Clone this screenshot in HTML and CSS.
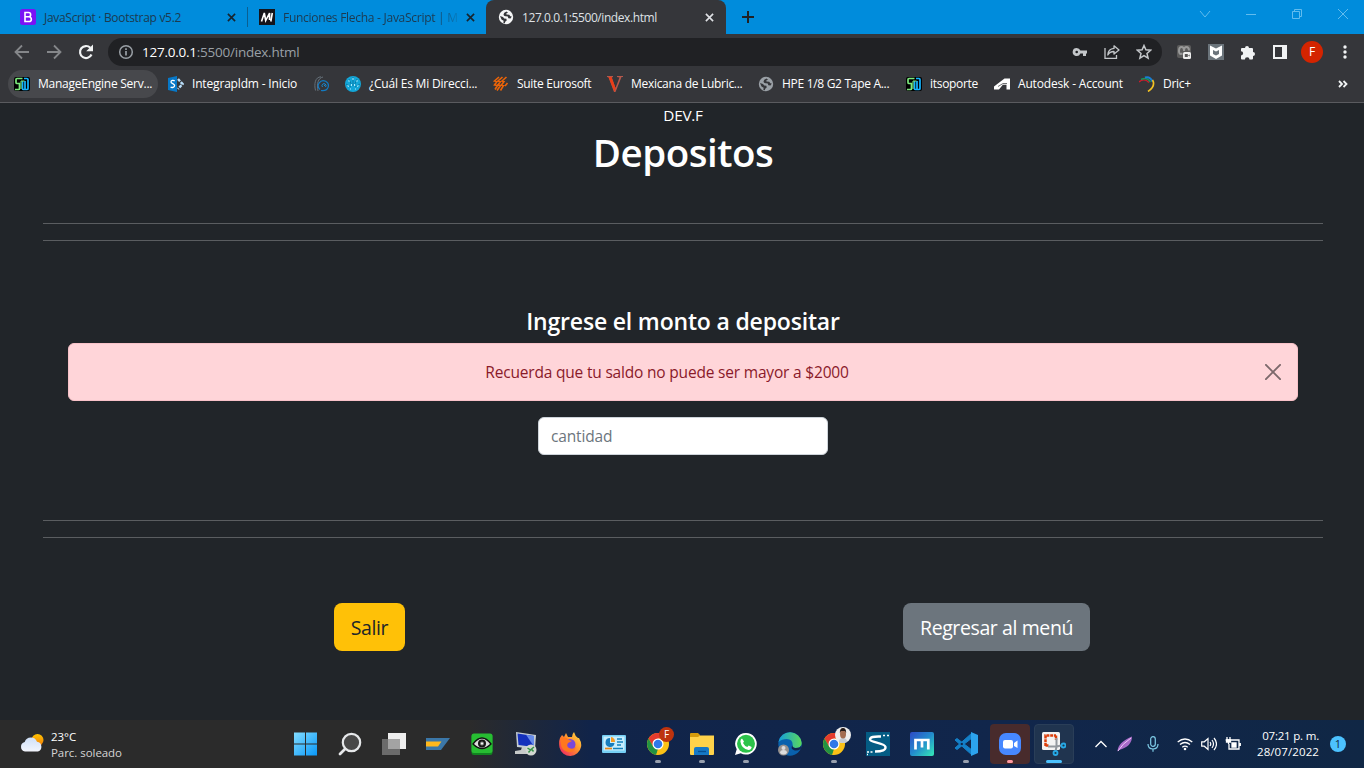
FILE: index.html
```
<!DOCTYPE html>
<html lang="es">
<head>
<meta charset="utf-8">
<title>127.0.0.1:5500/index.html</title>
<link rel="stylesheet" href="styles.css">
</head>
<body>
<svg class="defs" width="0" height="0">
  <defs>
    <symbol id="me" viewBox="0 0 16 16"><rect y="1" width="16" height="14" rx="2" fill="#000"/><path d="M8.500 2.500H3q-1 0-1 1v3q0 1 1 1h2.500v5q0 1-1 1H1" fill="none" stroke="#7be87b" stroke-width="1.700"/><path d="M8.500 5v7.500q0 1 1 1h1.500V5M10 2.500h3q1 0 1 1v9q0 1-1 1h-2" fill="none" stroke="#14b4ff" stroke-width="1.700"/><path d="M7 13V5h3.500" fill="none" stroke="#7be87b" stroke-width="1"/></symbol>
    <symbol id="globe" viewBox="0 0 16 16"><circle cx="8" cy="8" r="7.200" fill="currentColor"/><path d="M8.500 2.600Q5.500 3.500 5.500 5.500T8 7.300l1.800.2.500 1.700 2.200.4 1.300-2-1.500-.3-1-1.500-2.800-.2-.3-1 1.800-.8zM2 7l3 .9 1.200 1.500 2.200.4.3 1.700-1.500 1.200-.3 1.600-1.500-.4.200-2.100L3.500 10.500z" fill="var(--land)"/></symbol>
    <symbol id="chrome" viewBox="0 0 24 24"><circle cx="12" cy="12" r="11" fill="#fbc116"/><path d="M2.500 6.500A11 11 0 0 1 21.500 6.500H12L7.200 14.700z" fill="#e33b2e"/><path d="M2.500 6.500L7.200 14.800 12 17.500l-1.400 5.400A11 11 0 0 1 2.500 6.500z" fill="#229342"/><path d="M12 17.500l4.800-2.800L11.500 23l-1.500-.2z" fill="#fbc116"/><circle cx="12" cy="12" r="5.500" fill="#fff"/><circle cx="12" cy="12" r="4.300" fill="#3078e8"/></symbol>
  </defs>
</svg>

<div class="tabs">
  <div class="tab tab-a">
    <svg width="16" height="16" viewBox="0 0 16 16"><rect width="16" height="16" rx="2.500" fill="#7a12f5"/><path d="M5 3.500h3.500a2 2 0 0 1 0 4.300H5zM5 7.800h4a2.300 2.300 0 0 1 0 4.700H5z" fill="none" stroke="#fff" stroke-width="1.600"/></svg>
    <span class="tab-t t1">JavaScript · Bootstrap v5.2</span>
    <svg class="x" viewBox="0 0 10 10"><path d="M1 1l8 8M9 1l-8 8"/></svg>
  </div>
  <div class="sep"></div>
  <div class="tab tab-b">
    <svg width="16" height="16" viewBox="0 0 16 16"><rect width="16" height="16" fill="#15141a"/><path d="M2.500 12.500L5.300 4l1.400 7.500L10.600 4l-.1 7M13.300 4l-1.500 8.500" fill="none" stroke="#fff" stroke-width="1.600"/></svg>
    <span class="tab-t t2">Funciones Flecha - JavaScript | M</span>
    <svg class="x" viewBox="0 0 10 10"><path d="M1 1l8 8M9 1l-8 8"/></svg>
  </div>
  <div class="tab tab-c">
    <svg class="tab-globe" width="16" height="16"><use href="#globe"/></svg>
    <span class="tab-t t3">127.0.0.1:5500/index.html</span>
    <svg class="x light" viewBox="0 0 10 10"><path d="M1 1l8 8M9 1l-8 8"/></svg>
  </div>
  <svg class="plus" viewBox="0 0 12 12"><path d="M6 0v12M0 6h12" stroke="#202124" stroke-width="2"/></svg>
  <div class="winctl">
    <svg width="12" height="12" viewBox="0 0 12 12"><path d="M1 3l5 6 5-6"/></svg>
    <svg width="12" height="12" viewBox="0 0 12 12"><path d="M1 6.500h10"/></svg>
    <svg width="12" height="12" viewBox="0 0 12 12"><path d="M1.500 3.500h7v7h-7zM3.500 3.500v-2h7v7h-2"/></svg>
    <svg width="12" height="12" viewBox="0 0 12 12"><path d="M1 1l10 10M11 1L1 11"/></svg>
  </div>
</div>

<div class="toolbar">
  <svg class="nav" viewBox="0 0 16 16"><path d="M15 8H2M8 1.500L1.500 8 8 14.500" fill="none" stroke="#85878a" stroke-width="1.800"/></svg>
  <svg class="nav" viewBox="0 0 16 16"><path d="M1 8h13M8 1.500L14.500 8 8 14.500" fill="none" stroke="#85878a" stroke-width="1.800"/></svg>
  <svg class="nav" viewBox="0 0 16 16"><path d="M13.500 10.500A6 6 0 1 1 12.300 3.800" fill="none" stroke="#f1f3f4" stroke-width="2.200"/><path d="M15 .5v6.800H8.200z" fill="#f1f3f4"/></svg>
  <div class="omni">
    <svg width="16" height="16" viewBox="0 0 16 16"><circle cx="8" cy="8" r="6.300" fill="none" stroke="#9aa0a6" stroke-width="1.500"/><path d="M8 7v4.500M8 4.200v1.700" stroke="#9aa0a6" stroke-width="1.700"/></svg>
    <span class="url"><b>127.0.0.1</b>:5500/index.html</span>
    <svg width="16" height="16" viewBox="0 0 16 16"><path d="M4.700 4a4 4 0 1 0 3.700 5.400H11V12h3V9.400h1V6.600H8.400A4 4 0 0 0 4.700 4zm0 2.700a1.300 1.300 0 1 1 0 2.600 1.300 1.300 0 0 1 0-2.600z" fill="#c4c7ca"/></svg>
    <svg width="16" height="16" viewBox="0 0 16 16" fill="none" stroke="#c4c7ca" stroke-width="1.300"><path d="M1 4v10.400h11.500V11"/><path d="M10 1.800l5 4.200-5 4V7.500C7 7.500 5 8.800 3.800 11 4 7.500 6.200 4.700 10 4.400z" stroke-linejoin="round"/></svg>
    <svg width="16" height="16" viewBox="0 0 16 16"><path d="M8 1.500l1.900 4.300 4.700.4L11 9.400l1.100 4.700L8 11.600l-4.100 2.500L5 9.400 1.400 6.200l4.700-.4z" fill="none" stroke="#c4c7ca" stroke-width="1.500"/></svg>
  </div>
  <div class="ext">
    <svg width="16" height="16" viewBox="0 0 16 16"><rect x="1" y="1" width="14" height="13" rx="2" fill="#5b5b5b"/><path d="M6.500 9.500Q3 11 3 7q0-4 2.500-4T8 7q0-4 2.500-4T13 6.500" fill="none" stroke="#999" stroke-width="2"/><rect x="7" y="8" width="8" height="7" rx="1.500" fill="#eee"/><path d="M8.800 10h3v3h-3zM12 11.500l1.700-1v2z" fill="#555"/></svg>
    <svg width="16" height="16" viewBox="0 0 16 16"><rect width="16" height="16" fill="#6b747b"/><path d="M2 1.500l6 3 6-3v10L8 15l-6-3.500zM5 6v4l3 1.600 3-1.600V6L8 7.500z" fill="#fff" fill-rule="evenodd"/></svg>
    <svg width="16" height="16" viewBox="0 0 16 16"><path d="M1.500 4H5a2 2 0 1 1 4 0h3q1 0 1 1v3a2 2 0 1 1 0 4v2.500q0 1-1 1H9.500a2.300 2.300 0 0 0-4.600 0H2q-1 0-1-1v-3a2 2 0 1 0 0-4.300V5z" fill="#f1f3f4"/></svg>
    <svg width="16" height="16" viewBox="0 0 16 16"><path d="M1 1h14v14H1zM3 3v10h7V3z" fill="#f1f3f4" fill-rule="evenodd"/></svg>
  </div>
  <div class="avatar">F</div>
  <svg class="dots" viewBox="0 0 4 14" fill="#f1f3f4"><circle cx="2" cy="2" r="1.700"/><circle cx="2" cy="7" r="1.700"/><circle cx="2" cy="12" r="1.700"/></svg>
</div>

<div class="marks">
  <div class="bm b1"><svg><use href="#me"/></svg><span>ManageEngine Serv...</span></div>
  <div class="bm b2"><svg viewBox="0 0 16 16"><path d="M0 2l9-2v16l-9-2z" fill="#0778c8"/><path d="M6.700 5C5.500 4 3 4.300 3 6s3.600 1.700 3.600 3.500S4 12 2.600 11" fill="none" stroke="#fff" stroke-width="1.300"/><path d="M10 3l4.500 5-4.500 5" fill="none" stroke="#b9defa" stroke-width="2.500" stroke-dasharray="3 1.200"/></svg><span>Integrapldm - Inicio</span></div>
  <div class="bm b3"><svg viewBox="0 0 16 16" fill="none"><path d="M7 .8C1 1 0 8 1.500 14.500M9 1C4 2 2.500 8 4 15" stroke="#66717a"/><path d="M6 13.500a5 5 0 1 1 8-2c-1 2.500-4 3.500-7 3" stroke="#137bc2" stroke-width="1.200"/><path d="M8.500 11a2 2 0 1 1 3 0M10 10l2-2" stroke="#168bd4" stroke-width="1"/></svg></div>
  <div class="bm b4"><svg viewBox="0 0 16 16"><circle cx="8" cy="8" r="8" fill="#13a6d8"/><path d="M8 1v9M4 3l3 7M12 3l-3 7M1 8l5 3M15 8l-5 3" stroke="#087ba8" stroke-width="1"/><path d="M8 2v2M3.500 4.500l1 1M11.500 5.500l1-1M2.500 9.500l1.500 1M12 10.500l1.500-1M6.500 8v2M9.500 8v2M5 13h1M10 13h1" stroke="#a8ecff" stroke-width="1.100"/></svg><span>¿Cuál Es Mi Direcci...</span></div>
  <div class="bm b5"><svg viewBox="0 0 16 16"><path d="M6 1L1.500 5 4 5.500 1.500 9 4.500 9.500 2 13.500M9.500 1L5 5l2.500.5L5 9l2.500.5L4 14.500M13.500 1L9 5l2 .5L8.500 9l2 .5-3 5M14.500 7L12 10" fill="none" stroke="#ec6408" stroke-width="1.600"/></svg><span>Suite Eurosoft</span></div>
  <div class="bm b6"><svg viewBox="0 0 16 16"><path d="M0 0h6v1L4.800 1.500 8.500 12l4-10.500L10 1V0h6v1h-1.500L8.500 16H7L1.500 1.200 0 1z" fill="#b4584c"/><path d="M1.500 1h3l4 11-1 4z" fill="#ee3d17"/></svg><span>Mexicana de Lubric...</span></div>
  <div class="bm b7"><svg class="gray-globe"><use href="#globe"/></svg><span>HPE 1/8 G2 Tape A...</span></div>
  <div class="bm b8"><svg><use href="#me"/></svg><span>itsoporte</span></div>
  <div class="bm b9"><svg viewBox="0 0 16 16"><path d="M0 13.500v-3L10.500 2.500H16v11h-3.500V8.800h-3.700L5 13.500z" fill="#fff"/><path d="M4 10.500L9 7.500h4" stroke="#35363a" stroke-width=".7" fill="none"/></svg><span>Autodesk - Account</span></div>
  <div class="bm b10"><svg viewBox="0 0 16 16" fill="none" stroke-width="1.400"><path d="M0 6Q5 1.500 10 6.500" stroke="#cf1b2b"/><path d="M2 3.500Q8 .5 11.500 6" stroke="#16955b"/><path d="M6 1.500q5-1.500 7.500 4" stroke="#197fd4" stroke-width="2"/><path d="M13.500 4Q17 10 9 15.500" stroke="#f4c322" stroke-width="1.600"/></svg><span>Dric+</span></div>
  <svg class="more" viewBox="0 0 10 8"><path d="M1 1l3 3-3 3M5.500 1l3 3-3 3" fill="none" stroke="#f1f3f4" stroke-width="1.800"/></svg>
</div>

<main class="page">
  <div class="brand">DEV.F</div>
  <h1>Depositos</h1>
  <hr class="r1"><hr class="r2">
  <h4>Ingrese el monto a depositar</h4>
  <div class="alert"><span>Recuerda que tu saldo no puede ser mayor a $2000</span>
    <svg viewBox="0 0 16 16"><path d="M.9 .9l14.200 14.200M15.100 .9L.9 15.100" stroke="#7c686b" stroke-width="1.900" stroke-linecap="round"/></svg>
  </div>
  <input class="amount" type="text" placeholder="cantidad">
  <hr class="r3"><hr class="r2">
  <div class="actions">
    <div class="cell"><button class="btn exit">Salir</button></div>
    <div class="cell"><button class="btn back">Regresar al menú</button></div>
  </div>
</main>

<footer class="taskbar">
  <svg class="weather" viewBox="0 0 24 20"><defs><linearGradient id="sun" x2="0" y2="1"><stop stop-color="#ffc400"/><stop offset="1" stop-color="#f27a0a"/></linearGradient><linearGradient id="cl" x2="0" y2="1"><stop stop-color="#cfe0f8"/><stop offset="1" stop-color="#f2f5fc"/></linearGradient></defs><circle cx="17.500" cy="7" r="6" fill="url(#sun)"/><path d="M5 18.500a4.800 4.800 0 0 1-.3-9.400A6.500 6.500 0 0 1 17 8.800a5 5 0 0 1 1 9.700z" fill="url(#cl)"/></svg>
  <div class="wtext"><div class="deg">23°C</div><div class="cond">Parc. soleado</div></div>
  <div class="apps">
    <div class="app"><svg viewBox="0 0 24 24"><defs><linearGradient id="win" x2="1" y2="1"><stop stop-color="#82dcff"/><stop offset="1" stop-color="#0897f8"/></linearGradient></defs><path d="M0 .5h11v11H0zM12 .5h11v11H12zM0 12.500h11v11H0zM12 12.500h11v11H12z" fill="url(#win)"/></svg></div>
    <div class="app"><svg viewBox="0 0 24 24"><circle cx="13.500" cy="10.500" r="8.700" fill="#484848" stroke="#e6e8ea" stroke-width="2.200"/><path d="M7 17l-5 5" stroke="#e6e8ea" stroke-width="2.800" stroke-linecap="round"/></svg></div>
    <div class="app"><svg viewBox="0 0 24 24"><rect x="6" y="1" width="18" height="16" fill="#eeeeee"/><rect y="7" width="18" height="16" fill="#6b6b6b"/><path d="M6 7h12v10H6z" fill="#a3a3a3"/></svg></div>
    <div class="app"><svg viewBox="0 0 24 24"><path d="M0 6h24L15 18H0z" fill="#3b77a8"/><path d="M0 9.500h15.500l-3.500 5H0z" fill="#ffb81c"/></svg></div>
    <div class="app"><svg viewBox="0 0 24 24"><rect x="1.500" y="2" width="21" height="21" rx="2.500" fill="#118320"/><rect x="1.500" y="1.500" width="21" height="19.500" rx="2.500" fill="#27bd32"/><path d="M3 12q9-12 18 0-9 9-18 0z" fill="#ddd" stroke="#101010" stroke-width="1.300"/><circle cx="12" cy="11.500" r="4" fill="#161616"/><circle cx="12" cy="11.500" r="2" fill="#888"/><circle cx="12" cy="11.500" r="1" fill="#fff"/></svg></div>
    <div class="app"><svg viewBox="0 0 24 24"><path d="M2 0l20 3-1 14-18-2z" fill="#c5cdd3"/><path d="M3.500 1.500L20 4v11L4.500 13z" fill="#1430bc"/><path d="M12 2.800L20 4v10.500z" fill="#668bea"/><path d="M8 15h7v4l4 3H1v-3l6-1z" fill="#c7cac9"/><circle cx="17" cy="18" r="5.500" fill="#d3d7d1"/><path d="M13.500 16l3 2-2 2.500M20 15l-2.500 2 2 2.500" stroke="#359347" stroke-width="1.500" fill="none"/></svg></div>
    <div class="app"><svg viewBox="0 0 24 24"><defs><linearGradient id="ff" x1="1" x2="0" y2="1"><stop stop-color="#ffe34a"/><stop offset=".45" stop-color="#ff902c"/><stop offset="1" stop-color="#ec176a"/></linearGradient></defs><path d="M2 6l2-3 2 2 2-4 2 4 4 0q0-3 2-5 1 4 4 6l1 0q3 5 2 9a11 11 0 0 1-21.500.5Q.5 10 2 6z" fill="url(#ff)"/><circle cx="12" cy="12.500" r="5.500" fill="#7948d9"/><path d="M2 6q6-2 9 2l3 1-4 2q-2 3 1 5 4 2 7-1-2 6-8 5-7-2-7-8z" fill="#ff771f"/></svg></div>
    <div class="app"><svg viewBox="0 0 24 24"><rect y="3" width="24" height="18" rx="1" fill="#75cff5"/><rect x="1.500" y="4.500" width="21" height="14" fill="#c8eefe"/><path d="M8 6a4.500 4.500 0 1 0 4.500 5H8z" fill="#177dbd"/><path d="M9 5a5 5 0 0 1 4 5H9z" fill="#f49a23"/><path d="M15 7h5M15 10h6M15 13h4M11 16.500h10" stroke="#1582bd" stroke-width="1.700"/><path d="M3 16.500h7" stroke="#e88719" stroke-width="1.700"/></svg></div>
    <div class="app run"><svg><use href="#chrome"/></svg><b class="fbadge">F</b></div>
    <div class="app run"><svg viewBox="0 0 24 24"><path d="M0 2q0-1 1-1h7l2 2v4H0z" fill="#d59b0c"/><path d="M0 5h8l2-1.500h14V22q0 1-1 1H1q-1 0-1-1z" fill="#ffd24a"/><path d="M4 23v-6q0-2 2-2h11q2 0 2 2v6z" fill="#1678c6"/><path d="M8 19.500h8" stroke="#064f93" stroke-width="1.300"/></svg></div>
    <div class="app run"><svg viewBox="0 0 24 24"><path d="M12 1a10.800 10.800 0 1 1-5.200 20.300L1 23l1.700-5.700A10.800 10.800 0 0 1 12 1z" fill="#fff"/><circle cx="12" cy="11.800" r="9" fill="#2bc34a"/><path d="M8 6.500L10 9.500 9 11q1.500 3 4.300 4l1.400-1.500 3 1.500q-.5 3-3.200 3Q7.500 17 6.400 9.500 6.500 7 8 6.500z" fill="#fff"/></svg></div>
    <div class="app"><svg viewBox="0 0 24 24"><defs><linearGradient id="edge" x2="1"><stop stop-color="#159ddb"/><stop offset="1" stop-color="#5ad95b"/></linearGradient></defs><circle cx="12" cy="12" r="11.700" fill="#0961ad"/><path d="M.5 10A11.700 11.700 0 0 1 23.700 11q0 5-6 5-4-.5-3-3 0-6-6-6-5 0-8.200 3z" fill="url(#edge)"/><path d="M14.700 13q-1 2.500 3 3 4.500 0 5.500-2.500l-.5 3.500q-3 2-6 1.500-5-1.500-2-5.500z" fill="#10254c"/><circle cx="5.500" cy="18" r="5.500" fill="#96918e"/><circle cx="5.500" cy="16" r="2" fill="#ddd"/><path d="M2 21q0-3 3.500-3T9 21q-3.500 3-7 0z" fill="#ddd"/></svg></div>
    <div class="app run"><svg><use href="#chrome"/></svg><svg class="photo" viewBox="0 0 16 16"><circle cx="8" cy="8" r="8" fill="#eee"/><path d="M4 15q0-4 4-4t4 4q-4 2-8 0z" fill="#c6cbd2"/><ellipse cx="8" cy="7" rx="3" ry="4.500" fill="#a36c50"/><path d="M4.800 6q0-5 3.200-5t3.200 5L10 4H6z" fill="#241916"/></svg></div>
    <div class="app"><svg viewBox="0 0 24 24"><rect width="24" height="24" fill="#045c84"/><path d="M15 4.500Q4 4 4 7.500c0 3 15 3.500 15.500 7.500Q20 19.500 9 19.500" fill="none" stroke="#fff" stroke-width="2.400"/><path d="M17 3.500h2M21 3.500h2M1 20h2M4.500 20h2M1 22.500h1" stroke="#fff" stroke-width="1.600"/></svg></div>
    <div class="app"><svg viewBox="0 0 24 24"><defs><linearGradient id="mx" x2="1" y2="1"><stop stop-color="#2e49c5"/><stop offset=".5" stop-color="#238ccd"/><stop offset="1" stop-color="#35ebb6"/></linearGradient></defs><rect width="24" height="24" rx="2" fill="url(#mx)"/><path d="M5.500 17.500V8h12.800v9.500M12 8v7.500" fill="none" stroke="#fff" stroke-width="2.700"/></svg></div>
    <div class="app run"><svg viewBox="0 0 24 24"><path d="M1 8l2-1.500L18 18v5zM1 16l2 1.500L18 6V1z" fill="#1480c8" stroke="#1480c8" stroke-linejoin="round"/><path d="M17 0l7 3v18l-7 3z" fill="#2ca3ee"/></svg></div>
    <div class="app run zoom"><svg viewBox="0 0 24 24"><rect x="1" y="1" width="22" height="22" rx="7" fill="#4788ff"/><rect x="5" y="8" width="10" height="8.500" rx="2" fill="#fff"/><path d="M16 11l3.500-2.500v7.500L16 14z" fill="#fff"/></svg></div>
    <div class="app run snip"><svg viewBox="0 0 24 24"><rect width="18" height="18" rx="1.500" fill="#f4f4f4"/><path d="M3.500 14V3.500H14M14 3.500V8M3.500 13.500H7" fill="none" stroke="#dc3e0b" stroke-width="2.500" stroke-dasharray="3 .8"/><path d="M14.500 6v9l-1 4M6 14.500h9l4-1" stroke="#92989e" stroke-width="2" fill="none"/><circle cx="13.500" cy="21" r="2" fill="#173a51" stroke="#27a9e7" stroke-width="1.800"/><circle cx="21.500" cy="13.500" r="2" fill="#173a51" stroke="#27a9e7" stroke-width="1.800"/></svg></div>
  </div>
  <div class="tray">
    <svg viewBox="0 0 16 16"><path d="M2.500 11L8 5.500l5.500 5.500" stroke="#fff" stroke-width="1.300" fill="none"/></svg>
    <svg viewBox="0 0 16 16"><path d="M.5 15.500q0-9 14.500-15 0 10-13 13.500z" fill="#a66ac8"/><path d="M1 15Q5 8 14 2" stroke="#f0c8fa" stroke-width="1" fill="none"/></svg>
    <svg viewBox="0 0 16 16" fill="none" stroke="#7fcde8" stroke-width="1.200"><rect x="5.700" y=".7" width="4.600" height="9.600" rx="2.300"/><path d="M3 8q0 5 5 5t5-5M8 13v2.800"/></svg>
    <svg viewBox="0 0 16 16" fill="none" stroke="#fff" stroke-width="1.300"><path d="M.7 6q7.300-6 14.600 0M3 8.600q5-4.200 10 0M5.300 11.200q2.700-2.200 5.400 0"/><circle cx="8" cy="13" r="1.300" fill="#fff" stroke="none"/></svg>
    <svg viewBox="0 0 16 16" fill="none" stroke="#fff" stroke-width="1.200"><path d="M.7 5.800v4.400h2.600L7 13.500v-11L3.300 5.800zM9 6q1.500 2 0 4M11 4q3 4 0 8M13 2q5 6 0 12"/></svg>
    <svg viewBox="0 0 16 16" fill="none" stroke="#fff" stroke-width="1.300"><path d="M6 4h8v9H4V8M15.300 7v3M2 1v3M5 1v3M.7 4h5.600M3.500 4v4"/><path d="M1.500 4h4v2h-4zM7 7h4v4H7z" fill="#fff"/></svg>
  </div>
  <div class="clock"><div class="time">07:21 p. m.</div><div class="date">28/07/2022</div></div>
  <div class="notif">1</div>
</footer>
</body>
</html>
```
FILE: styles.css
```
* { box-sizing: border-box; }
body {
  margin: 0;
  width: 1364px;
  height: 768px;
  overflow: hidden;
  background: #212529;
  font-family: "Open Sans", "Noto Sans", sans-serif;
  white-space: nowrap;
}
svg { display: block; flex: none; }
.defs { position: absolute; }

/* Tab strip */
.tabs { height: 34px; display: flex; align-items: center; background: #008cdc; }
.tab { height: 34px; display: flex; align-items: center; font-size: 12px; color: #1c3a50; }
.tab-a { width: 247px; padding-left: 20px; }
.tab-b { width: 238px; padding-left: 11px; }
.tab-c { width: 240px; padding-left: 12px; background: #35363a; border-radius: 8px 8px 0 0; color: #dfe1e5; --land: #35363a; }
.tab-globe { color: #f5f6f7; }
.sep { width: 1px; height: 20px; background: #0b5f91; }
.tab-t { margin-left: 8px; letter-spacing: -0.3px; }
.t1 { width: 183px; }
.t2 { width: 176px; letter-spacing: -0.27px; -webkit-mask-image: linear-gradient(90deg, #000 86%, transparent 102%); mask-image: linear-gradient(90deg, #000 86%, transparent 102%); }
.t3 { width: 175px; margin-left: 8px; letter-spacing: -0.42px; }
.x { width: 9px; height: 9px; margin-left: 0; stroke: #17242e; stroke-width: 1.8; }
.tab-b .x { margin-left: 7px; }
.tab-c .x { margin-left: 8px; }
.x.light { stroke: #dfe1e5; }
.plus { width: 12px; height: 12px; margin-left: 16px; }
.winctl { display: flex; gap: 34px; margin-left: auto; padding: 0 15px 6px 0; fill: none; stroke: #62bcee; stroke-width: 1; }

/* Toolbar */
.toolbar { height: 36px; display: flex; align-items: center; background: #35363a; padding-left: 14px; }
.nav { width: 16px; height: 16px; margin-right: 16px; }
.omni { width: 1054px; height: 28px; margin-left: -2px; padding: 0 10px; border-radius: 14px; background: #202124; display: flex; align-items: center; gap: 16px; }
.url { flex: 1; margin-left: -8px; font-size: 13.5px; letter-spacing: -0.24px; color: #9aa0a6; }
.url b { font-weight: 400; color: #fff; }
.ext { display: flex; gap: 16px; margin-left: 14px; }
.avatar { width: 22px; height: 22px; margin-left: 13px; border-radius: 50%; background: #d42400; color: #fff; font-size: 12px; line-height: 22px; text-align: center; }
.dots { width: 4px; height: 14px; margin-left: 20px; }

/* Bookmarks */
.marks { height: 33px; padding: 0 0 5px 8px; display: flex; align-items: center; gap: 4px; background: #35363a; border-bottom: 1px solid #5a5b5f; color: #fff; font-size: 12px; }
.bm { height: 28px; padding-left: 6px; display: flex; align-items: center; gap: 8px; letter-spacing: -0.3px; }
.bm svg { width: 16px; height: 16px; }
.gray-globe { color: #9aa0a6; --land: #35363a; }
.b1 { width: 150px; border-radius: 14px; background: #47484c; letter-spacing: -0.25px; }
.b2 { width: 142px; letter-spacing: -0.17px; }
.b3 { width: 27px; }
.b4 { width: 144px; letter-spacing: -0.2px; }
.b5 { width: 110px; }
.b6 { width: 147px; }
.b7 { width: 144px; }
.b8 { width: 84px; }
.b9 { width: 141px; letter-spacing: -0.17px; }
.b10 { width: 70px; }
.more { width: 10px; height: 8px; margin-left: auto; margin-right: 16px; }

/* Page */
.page { height: 617px; display: flex; flex-direction: column; align-items: center; padding: 0 41px 0 43px; color: #fff; }
.brand { height: 24px; line-height: 24px; font-size: 15.3px; letter-spacing: -0.25px; }
h1 { margin: 0; height: 48px; padding-top: 1px; line-height: 48px; font-size: 38.5px; font-weight: 600; letter-spacing: -0.5px; }
hr { width: 1280px; height: 1px; margin: 0; border: 0; background: #5a5d60; flex: none; }
.r1 { margin-top: 48px; }
.r2 { margin-top: 16px; }
.r3 { margin-top: 65px; }
h4 { margin: 66px 0 0; height: 29px; line-height: 29px; font-size: 23px; font-weight: 600; letter-spacing: -0.18px; }
.alert { width: 1230px; height: 58px; margin-top: 7px; padding: 0 16px 0 0; border: 1px solid #f8c2c8; border-radius: 6px; background: #ffd5d9; color: #8a1a2a; font-size: 15.5px; letter-spacing: -0.19px; display: flex; align-items: center; }
.alert span { flex: 1; text-align: center; }
.alert svg { width: 16px; height: 16px; }
.amount { width: 290px; height: 38px; margin-top: 16px; padding: 6px 12px; border: 1px solid #ced4da; border-radius: 6px; background: #fff; font: 15.5px "Open Sans", sans-serif; letter-spacing: -0.15px; flex: none; }
.amount::placeholder { color: #6c757d; opacity: 1; }
.actions { width: 1280px; margin-top: 65px; display: flex; }
.cell { flex: 1; display: flex; justify-content: center; }
.btn { height: 48px; border: 0; border-radius: 8px; padding: 0; font: 19.5px "Open Sans", sans-serif; letter-spacing: -0.4px; }
.exit { width: 71px; margin-left: 13px; background: #ffc107; color: #212529; }
.back { width: 187px; margin-right: 13px; background: #6c757d; color: #fff; }

/* Taskbar */
.taskbar { height: 48px; display: flex; align-items: center; background: linear-gradient(90deg, #2b2b2b 0, #2b2b2b 470px, #112449 590px, #11264b 1000px, #102745 100%); color: #fff; font-size: 11.500px; }
.weather { width: 24px; height: 20px; margin: 0 0 2px 20px; }
.wtext { width: 235px; margin-left: 7px; padding-top: 2px; line-height: 16px; letter-spacing: -0.05px; }
.cond { color: #d5d5d5; }
.apps { display: flex; gap: 4px; }
.app { position: relative; width: 40px; height: 40px; display: flex; align-items: center; justify-content: center; }
.app > svg { width: 24px; height: 24px; }
.run::after { content: ""; position: absolute; left: 17px; bottom: 1px; width: 6px; height: 3px; border-radius: 2px; background: #98a0ae; }
.fbadge { position: absolute; left: 21px; top: 3px; width: 15px; height: 15px; border-radius: 50%; background: #bd330e; font-size: 10px; font-weight: 400; line-height: 15px; text-align: center; }
.app > .photo { position: absolute; left: 21px; top: 3px; width: 16px; height: 16px; }
.zoom { background: #482b2c; border-radius: 4px; }
.zoom::after { background: #ff99a2; }
.snip { background: #20344f; border: 1px solid #2a3e58; border-radius: 4px; }
.snip::after { left: 11px; bottom: 0; width: 16px; background: #4cc2ff; }
.tray { display: flex; margin-left: 19px; gap: 8px; }
.tray svg { width: 16px; height: 16px; }
.tray svg:nth-child(3) { margin-left: 4px; }
.tray svg:nth-child(4) { margin-left: 8px; }
.clock { width: 78px; line-height: 16px; text-align: right; }
.time { letter-spacing: -0.2px; }
.date { letter-spacing: 0.1px; }
.notif { width: 16px; height: 16px; margin-left: 11px; border-radius: 50%; background: #4cc2ff; color: #102745; font-size: 11px; line-height: 16px; text-align: center; }
```
